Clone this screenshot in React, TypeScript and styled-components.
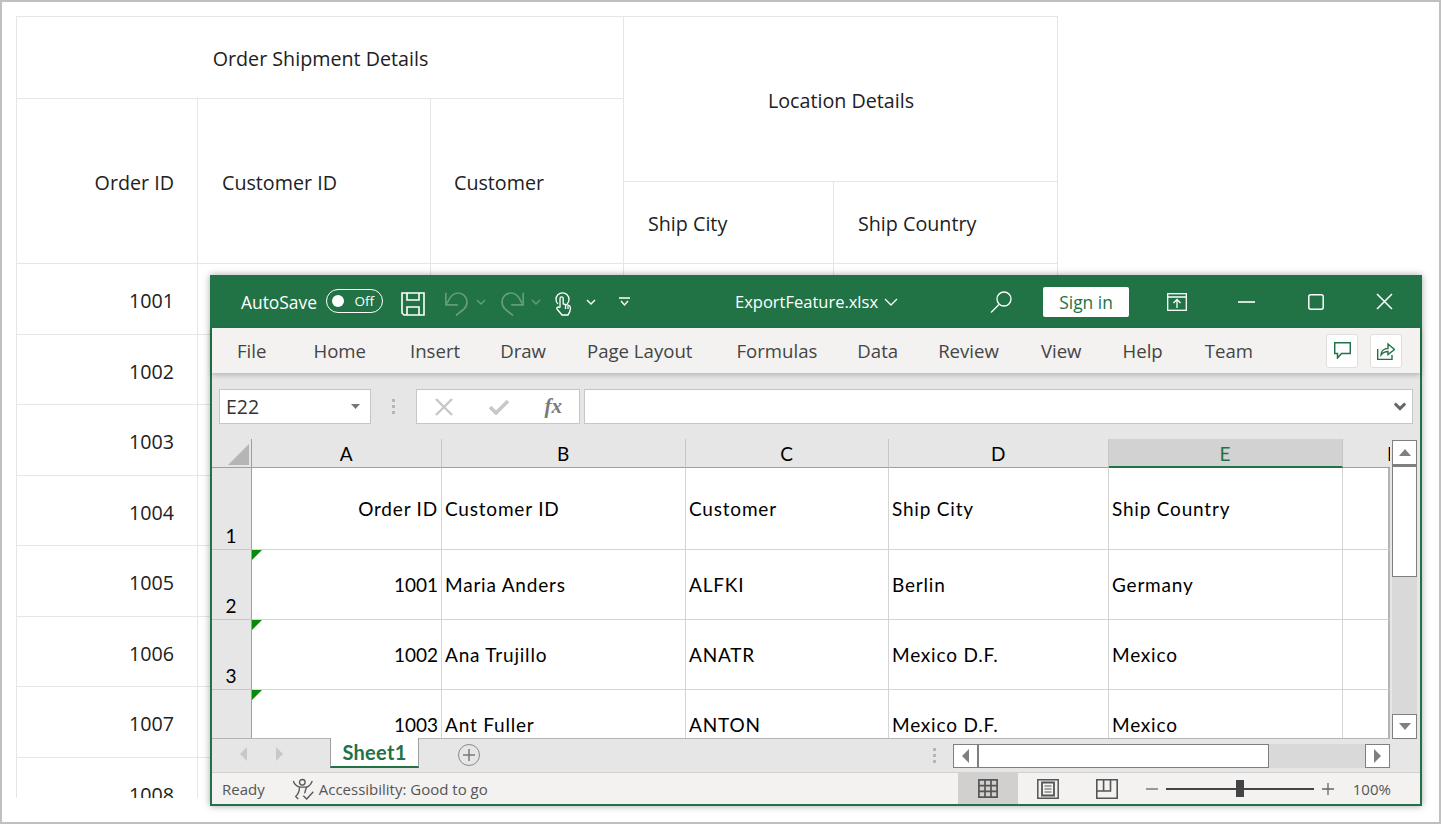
import { Fragment } from "react";
import styled, { createGlobalStyle } from "styled-components";

const GREEN = "#217346";
const UI_FONT = `"Open Sans", "Noto Sans", sans-serif`;
const CELL_FONT = `"Lato", "Open Sans", sans-serif`;

const GlobalStyle = createGlobalStyle`
  html, body { margin: 0; padding: 0; background: #fff; }
  * { box-sizing: border-box; }
`;

const Page = styled.div`
  position: relative;
  width: 1441px;
  height: 824px;
  padding: 14px 0 0 14px;
  border: 2px solid #c0c0c0;
  background: #fff;
  overflow: hidden;
  font-family: ${UI_FONT};
`;

/* ---------- web grid behind ---------- */
const WebGrid = styled.div`
  display: grid;
  grid-template-columns: 181px 233px 193px 210px 224px;
  grid-template-rows: 82px 83px 82px repeat(8, 70.5px);
  width: 1042px;
  height: 782px;
  overflow: hidden;
  border-top: 1px solid #e6e6e6;
  border-left: 1px solid #e6e6e6;
  font-size: 19.7px;
  color: #212121;
`;

const GridCell = styled.div<{ $align?: string; $col?: string; $row?: string; $data?: boolean; $pl?: number }>`
  display: flex;
  align-items: center;
  justify-content: ${(p) => p.$align || "flex-start"};
  grid-column: ${(p) => p.$col || "auto"};
  grid-row: ${(p) => p.$row || "auto"};
  padding: ${(p) => (p.$data ? "4px" : "2px")} 23px 0 ${(p) => p.$pl || 24}px;
  border-right: 1px solid #e6e6e6;
  border-bottom: 1px solid #e6e6e6;
`;

/* ---------- excel window ---------- */
const ExcelWindow = styled.div`
  position: absolute;
  left: 208px;
  top: 273px;
  width: 1212px;
  height: 531px;
  display: flex;
  flex-direction: column;
  border: 2px solid ${GREEN};
  border-top: 0;
  background: #e6e6e6;
  box-shadow: 0 0 7px rgba(0, 0, 0, 0.35);
`;

const TitleBar = styled.div`
  flex: 0 0 53px;
  display: flex;
  align-items: center;
  padding-left: 31px;
  margin: 0 -2px;
  background: ${GREEN};
  color: #fff;
  font-size: 16.5px;
`;

const TitleText = styled.span<{ $ml?: number; $size?: number }>`
  margin-left: ${(p) => p.$ml || 0}px;
  font-size: ${(p) => p.$size || 16.5}px;
  white-space: nowrap;
`;

const Toggle = styled.div`
  display: flex;
  align-items: center;
  justify-content: space-between;
  width: 57px;
  height: 24px;
  margin: 0 0 2px 9px;
  padding: 0 8px 0 5px;
  border: 1px solid #fff;
  border-radius: 12px;
  font-size: 13.5px;
  &::before {
    content: "";
    width: 12px;
    height: 12px;
    border-radius: 50%;
    background: #fff;
  }
`;

const TitleIcon = styled.svg<{ $ml: number; $dim?: boolean; $mt?: number }>`
  flex: none;
  margin-left: ${(p) => p.$ml}px;
  margin-top: ${(p) => p.$mt || 0}px;
  fill: none;
  stroke: currentColor;
  opacity: ${(p) => (p.$dim ? 0.3 : 1)};
`;

const SignIn = styled.div`
  width: 86px;
  height: 30px;
  margin-left: 31px;
  display: flex;
  align-items: center;
  justify-content: center;
  background: #fff;
  border-radius: 2px;
  color: ${GREEN};
  font-size: 17.4px;
`;

const Ribbon = styled.div`
  flex: 0 0 45px;
  display: flex;
  align-items: center;
  padding: 0 18px 0 25px;
  background: #f3f2f1;
  box-shadow: 0 2px 5px rgba(0, 0, 0, 0.22);
  position: relative;
  color: #444;
  font-size: 18.6px;
`;

const RibbonTab = styled.span<{ $ml: number }>`
  margin-left: ${(p) => p.$ml}px;
  white-space: nowrap;
`;

const RibbonActions = styled.div`
  margin-left: auto;
  display: flex;
  gap: 12px;
`;

const RibbonButton = styled.div`
  width: 32px;
  height: 34px;
  display: flex;
  align-items: center;
  justify-content: center;
  background: #fff;
  border: 1px solid #e1dfdd;
  border-radius: 3px;
  color: ${GREEN};
`;

const FormulaBar = styled.div`
  flex: 0 0 66px;
  display: flex;
  align-items: flex-start;
  padding: 16px 7px 0 7px;
`;

const InputBox = styled.div<{ $w?: number }>`
  height: 35px;
  ${(p) => (p.$w ? `width: ${p.$w}px;` : "flex: 1;")}
  display: flex;
  align-items: center;
  background: #fff;
  border: 1px solid #c6c6c6;
`;

const NameBox = styled(InputBox)`
  justify-content: space-between;
  padding: 0 10px 0 6px;
  font-size: 19.5px;
  color: #333;
`;

const Grip = styled.div`
  flex: none;
  width: 3px;
  height: 15px;
  background: repeating-linear-gradient(to bottom, #b5b5b5 0 3px, transparent 3px 6px);
`;

const GripSlot = styled.div`
  flex: 0 0 45px;
  height: 35px;
  display: flex;
  align-items: center;
  justify-content: center;
`;

const FormulaButtons = styled(InputBox)`
  margin-right: 4px;
  justify-content: space-between;
  padding: 0 17px 0 18px;
  color: #c8c8c8;
`;

const FxLabel = styled.span`
  font-family: "Liberation Serif", serif;
  font-style: italic;
  font-weight: 700;
  font-size: 21px;
  color: #7a7a7a;
`;

const FormulaInput = styled(InputBox)`
  justify-content: flex-end;
  padding-right: 6px;
`;

const SheetArea = styled.div`
  flex: 0 0 300px;
  display: flex;
  min-height: 0;
`;

const Sheet = styled.div`
  flex: 0 0 1178px;
  display: grid;
  grid-template-columns: 40px 190px 244px 203px 220px 234px 47px;
  grid-template-rows: 29px 82px 70px 70px 70px;
  overflow: hidden;
  font-family: ${CELL_FONT};
  font-size: 19px;
  letter-spacing: 0.8px;
  color: #000;
  background: #fff;
  border-bottom: 1px solid #b4b4b4;
`;

const ColHead = styled.div<{ $active?: boolean; $clip?: boolean }>`
  display: flex;
  align-items: center;
  justify-content: ${(p) => (p.$clip ? "flex-start" : "center")};
  padding-top: 1px;
  overflow: hidden;
  background: ${(p) => (p.$active ? "#d2d2d2" : "#e6e6e6")};
  color: ${(p) => (p.$active ? GREEN : "#000")};
  border-right: ${(p) => (p.$clip ? "0" : "1px solid #c6c6c6")};
  border-bottom: ${(p) => (p.$active ? `2px solid ${GREEN}` : "1px solid #9f9f9f")};
  padding-left: ${(p) => (p.$clip ? "44px" : "0")};
`;

const Corner = styled(ColHead)`
  align-items: flex-end;
  justify-content: flex-end;
  padding: 0 2px 2px 0;
  border-right: 1px solid #9f9f9f;
  &::before {
    content: "";
    width: 0;
    height: 0;
    border-left: 21px solid transparent;
    border-bottom: 21px solid #b5b5b5;
  }
`;

const RowHead = styled.div`
  display: flex;
  align-items: flex-end;
  justify-content: center;
  padding-bottom: 2px;
  background: #e6e6e6;
  border-right: 1px solid #9f9f9f;
  border-bottom: 1px solid #c6c6c6;
`;

const Cell = styled.div<{ $right?: boolean; $flag?: boolean; $last?: boolean }>`
  position: relative;
  display: flex;
  align-items: center;
  justify-content: ${(p) => (p.$right ? "flex-end" : "flex-start")};
  padding: 0 3px;
  white-space: nowrap;
  border-right: ${(p) => (p.$last ? "2px solid #b4b4b4" : "1px solid #d4d4d4")};
  border-bottom: 1px solid #d4d4d4;
  ${(p) =>
    p.$flag
      ? `letter-spacing: 0;
        &::before {
          content: "";
          position: absolute;
          left: 0;
          top: 0;
          border-top: 10px solid #0a8a0a;
          border-right: 10px solid transparent;
        }`
      : ""}
`;

const VScroll = styled.div`
  flex: 0 0 28px;
  display: flex;
  flex-direction: column;
  padding: 1px 3px 0 2px;
`;

const ScrollButton = styled.div<{ $w?: number; $h?: number }>`
  flex: none;
  width: ${(p) => p.$w || 25}px;
  height: ${(p) => p.$h || 25}px;
  display: flex;
  align-items: center;
  justify-content: center;
  background: #fff;
  border: 1px solid #7f7f7f;
`;

const VThumb = styled.div`
  flex: 0 0 112px;
  background: #fff;
  border: 1px solid #7f7f7f;
  border-top-width: 2px;
`;

const VTrack = styled.div`
  flex: 1;
  background: #d9d9d9;
`;

const TabStrip = styled.div`
  flex: 0 0 33px;
  display: flex;
  align-items: flex-start;
  font-size: 18px;
`;

const TabNav = styled.div`
  flex: 0 0 118px;
  height: 30px;
  display: flex;
  align-items: center;
  gap: 27px;
  padding-left: 27px;
  color: #c8c8c8;
`;

const SheetTab = styled.div`
  flex: 0 0 89px;
  height: 30px;
  margin-top: -1px;
  display: flex;
  align-items: center;
  justify-content: center;
  background: #fff;
  border-left: 1px solid #9f9f9f;
  border-right: 1px solid #9f9f9f;
  border-bottom: 2px solid ${GREEN};
  color: ${GREEN};
  font-family: ${CELL_FONT};
  font-weight: 700;
  font-size: 20px;
  letter-spacing: 0.3px;
`;

const AddSheet = styled.div`
  flex: none;
  width: 22px;
  height: 22px;
  margin: 5px 0 0 39px;
  display: flex;
  align-items: center;
  justify-content: center;
  border: 1.5px solid #8a8a8a;
  border-radius: 50%;
  color: #7a7a7a;
`;

const HScrollGrip = styled.div`
  flex: none;
  margin: 9px 0 0 453px;
  width: 3px;
`;

const HScroll = styled.div`
  flex: 0 0 437px;
  height: 24px;
  margin: 5px 0 0 17px;
  display: flex;
  background: #d9d9d9;
`;

const HThumb = styled.div`
  flex: 0 0 292px;
  margin-left: -1px;
  background: #fff;
  border: 1px solid #7f7f7f;
  border-left-width: 2px;
`;

const HGap = styled.div`
  flex: 1;
`;

const StatusBar = styled.div`
  flex: 1;
  display: flex;
  align-items: center;
  padding-left: 10px;
  background: #f3f2f1;
  border-top: 1px solid #d1d1d1;
  color: #555;
  font-size: 15px;
`;

const StatusText = styled.span<{ $ml?: number }>`
  margin-left: ${(p) => p.$ml || 0}px;
  white-space: nowrap;
`;

const AccessIcon = styled.svg`
  flex: none;
  margin-left: 27px;
`;

const ViewButton = styled.div<{ $active?: boolean; $ml?: number }>`
  flex: none;
  width: 60px;
  height: 100%;
  margin-left: ${(p) => p.$ml || 0}px;
  display: flex;
  align-items: center;
  justify-content: center;
  background: ${(p) => (p.$active ? "#d2d0ce" : "transparent")};
  color: #555;
`;

const ZoomSlider = styled.div`
  position: relative;
  flex: 0 0 148px;
  height: 2px;
  margin: 0 8px;
  background: #444;
`;

const ZoomThumb = styled.div`
  position: absolute;
  left: 70px;
  top: -8px;
  width: 8px;
  height: 17px;
  background: #444;
`;

const ZoomSign = styled.svg<{ $ml?: number }>`
  flex: none;
  margin-left: ${(p) => p.$ml || 0}px;
  stroke: #666;
`;

const webRows = [1001, 1002, 1003, 1004, 1005, 1006, 1007, 1008];

const sheetRows = [
  { id: "1001", name: "Maria Anders", code: "ALFKI", city: "Berlin", country: "Germany" },
  { id: "1002", name: "Ana Trujillo", code: "ANATR", city: "Mexico D.F.", country: "Mexico" },
  { id: "1003", name: "Ant Fuller", code: "ANTON", city: "Mexico D.F.", country: "Mexico" },
];

const ribbonTabs: [string, number][] = [
  ["File", 0],
  ["Home", 47],
  ["Insert", 44],
  ["Draw", 40],
  ["Page Layout", 41],
  ["Formulas", 44],
  ["Data", 40],
  ["Review", 40],
  ["View", 42],
  ["Help", 41],
  ["Team", 42],
];

const Triangle = ({ dir, color = "#7f7f7f" }: { dir: "up" | "down" | "left" | "right"; color?: string }) => {
  const pts = {
    up: "0,8 6,1 12,8",
    down: "0,1 12,1 6,8",
    left: "8,0 8,14 1,7",
    right: "1,0 1,14 8,7",
  }[dir];
  const vertical = dir === "up" || dir === "down";
  return (
    <svg width={vertical ? 14 : 9} height={vertical ? 9 : 14} viewBox={vertical ? "-1 0 14 9" : "0 0 9 14"} fill={color}>
      <polygon points={pts} />
    </svg>
  );
};

const Chevron = ({ ml, dim }: { ml: number; dim?: boolean }) => (
  <TitleIcon $ml={ml} $dim={dim} width="10" height="6" viewBox="0 0 10 6" strokeWidth="1.4">
    <path d="M1 1l4 4 4-4" />
  </TitleIcon>
);

export default function App() {
  return (
    <>
      <GlobalStyle />
      <Page>
        <WebGrid>
          <GridCell $col="1 / 4" $align="center">Order Shipment Details</GridCell>
          <GridCell $col="4 / 6" $row="1 / 3" $align="center">Location Details</GridCell>
          <GridCell $row="2 / 4" $align="flex-end">Order ID</GridCell>
          <GridCell $row="2 / 4">Customer ID</GridCell>
          <GridCell $row="2 / 4" $pl={23}>Customer</GridCell>
          <GridCell>Ship City</GridCell>
          <GridCell>Ship Country</GridCell>
          {webRows.map((id) => (
            <Fragment key={id}>
              <GridCell $data $align="flex-end">{id}</GridCell>
              <GridCell />
              <GridCell />
              <GridCell />
              <GridCell />
            </Fragment>
          ))}
        </WebGrid>

        <ExcelWindow>
          <TitleBar>
            <TitleText $size={17.4}>AutoSave</TitleText>
            <Toggle>Off</Toggle>
            <TitleIcon $ml={18} $mt={4} width="24" height="24" viewBox="0 0 24 24" strokeWidth="1.6">
              <path d="M1 1h22v22H3l-2-2z" />
              <path d="M6 1v7h12V1M6 23v-8h12v8" />
            </TitleIcon>
            <TitleIcon $ml={20} $mt={4} $dim width="24" height="24" viewBox="0 0 24 24" strokeWidth="1.7">
              <path d="M.8 .8V12.8H12.8" />
              <path d="M2 11.5C5 4 9 1 13 1c5 0 9 4 9 9 0 3-1 5-3 7l-8 6.5" />
            </TitleIcon>
            <Chevron ml={7} dim />
            <TitleIcon $ml={14} $mt={4} $dim width="24" height="24" viewBox="0 0 24 24" strokeWidth="1.7">
              <path d="M23.2 .8V12.8H11.2" />
              <path d="M22 11.5C19 4 15 1 11 1 6 1 2 5 2 10c0 3 1 5 3 7l8 6.5" />
            </TitleIcon>
            <Chevron ml={7} dim />
            <TitleIcon $ml={13} $mt={4} width="18" height="24" viewBox="0 0 18 24" strokeWidth="1.3">
              <path d="M4 12a6.5 6.5 0 1 1 9 0" />
              <path d="M6 15V6.5a1.6 1.6 0 0 1 3.2 0V12l5 1.2c1.4.4 2.3 1.4 2.3 2.8 0 3-1 5-2.5 7H8l-5-6c-.8-1.3.8-2.6 2-1.6z" fill={GREEN} />
              <path d="M11.5 13v4M14 14v3" />
            </TitleIcon>
            <Chevron ml={14} />
            <TitleIcon $ml={23} width="11" height="9" viewBox="0 0 11 9" strokeWidth="1.3">
              <path d="M0 1h11M2 4l3.5 4L9 4" />
            </TitleIcon>
            <TitleText $ml={105}>ExportFeature.xlsx</TitleText>
            <TitleIcon $ml={6} width="14" height="8" viewBox="0 0 14 8" strokeWidth="1.3">
              <path d="M1 1l6 6 6-6" />
            </TitleIcon>
            <TitleIcon $ml={92} width="22" height="22" viewBox="0 0 22 22" strokeWidth="1.3">
              <circle cx="14" cy="8" r="7" />
              <path d="M9 13.5L1 21.5" />
            </TitleIcon>
            <SignIn>Sign in</SignIn>
            <TitleIcon $ml={38} width="20" height="18" viewBox="0 0 20 18" strokeWidth="1.3">
              <rect x="0.7" y="0.7" width="18.6" height="16.6" />
              <path d="M1 4h18M10 15V7M6.5 10L10 6.5l3.5 3.5" />
            </TitleIcon>
            <TitleIcon $ml={51} width="17" height="2" viewBox="0 0 17 2" strokeWidth="1.6">
              <path d="M0 1h17" />
            </TitleIcon>
            <TitleIcon $ml={53} width="16" height="16" viewBox="0 0 16 16" strokeWidth="1.5">
              <rect x="0.8" y="0.8" width="14.4" height="14.4" rx="2" />
            </TitleIcon>
            <TitleIcon $ml={52} width="17" height="17" viewBox="0 0 17 17" strokeWidth="1.5">
              <path d="M1 1l15 15M16 1L1 16" />
            </TitleIcon>
          </TitleBar>

          <Ribbon>
            {ribbonTabs.map(([label, ml]) => (
              <RibbonTab key={label} $ml={ml}>{label}</RibbonTab>
            ))}
            <RibbonActions>
              <RibbonButton>
                <svg width="17" height="17" viewBox="0 0 17 17" fill="none" stroke="currentColor" strokeWidth="1.5">
                  <path d="M.7 .7h15.6v10.8H7.5l-4 4.5v-4.5H.7z" />
                </svg>
              </RibbonButton>
              <RibbonButton>
                <svg width="18" height="18" viewBox="0 0 18 18" fill="none" stroke="currentColor" strokeWidth="1.4">
                  <path d="M.7 7v10.5H15V13" />
                  <path d="M4 13c0-4 3-6.5 7-6.5V2l6.5 5.5-6.5 5V9.5c-3 0-5 1-7 3.5z" />
                </svg>
              </RibbonButton>
            </RibbonActions>
          </Ribbon>

          <FormulaBar>
            <NameBox $w={152}>
              E22
              <svg width="9" height="5" viewBox="0 0 9 5" fill="#777">
                <polygon points="0,0 9,0 4.5,5" />
              </svg>
            </NameBox>
            <GripSlot><Grip /></GripSlot>
            <FormulaButtons $w={164}>
              <svg width="18" height="18" viewBox="0 0 18 18" stroke="currentColor" strokeWidth="2.4">
                <path d="M1 1l16 16M17 1L1 17" />
              </svg>
              <svg width="20" height="16" viewBox="0 0 20 16" fill="none" stroke="currentColor" strokeWidth="3.6">
                <path d="M1 8l6 6L19 2" />
              </svg>
              <FxLabel>fx</FxLabel>
            </FormulaButtons>
            <FormulaInput>
              <svg width="12" height="9" viewBox="0 0 14 10" fill="none" stroke="#666" strokeWidth="3.4">
                <path d="M1 1.5l6 6 6-6" />
              </svg>
            </FormulaInput>
          </FormulaBar>

          <SheetArea>
            <Sheet>
              <Corner />
              <ColHead>A</ColHead>
              <ColHead>B</ColHead>
              <ColHead>C</ColHead>
              <ColHead>D</ColHead>
              <ColHead $active>E</ColHead>
              <ColHead $clip>F</ColHead>

              <RowHead>1</RowHead>
              <Cell $right>Order ID</Cell>
              <Cell>Customer ID</Cell>
              <Cell>Customer</Cell>
              <Cell>Ship City</Cell>
              <Cell>Ship Country</Cell>
              <Cell $last />

              {sheetRows.map((row, i) => (
                <Fragment key={row.id}>
                  <RowHead>{i + 2}</RowHead>
                  <Cell $right $flag>{row.id}</Cell>
                  <Cell>{row.name}</Cell>
                  <Cell>{row.code}</Cell>
                  <Cell>{row.city}</Cell>
                  <Cell>{row.country}</Cell>
                  <Cell $last />
                </Fragment>
              ))}
            </Sheet>
            <VScroll>
              <ScrollButton><Triangle dir="up" /></ScrollButton>
              <VThumb />
              <VTrack />
              <ScrollButton><Triangle dir="down" /></ScrollButton>
            </VScroll>
          </SheetArea>

          <TabStrip>
            <TabNav>
              <Triangle dir="left" color="#c8c8c8" />
              <Triangle dir="right" color="#c8c8c8" />
            </TabNav>
            <SheetTab>Sheet1</SheetTab>
            <AddSheet>
              <svg width="12" height="12" viewBox="0 0 12 12" stroke="currentColor" strokeWidth="1.5">
                <path d="M6 0v12M0 6h12" />
              </svg>
            </AddSheet>
            <HScrollGrip><Grip /></HScrollGrip>
            <HScroll>
              <ScrollButton $w={25} $h={24}><Triangle dir="left" /></ScrollButton>
              <HThumb />
              <HGap />
              <ScrollButton $w={25} $h={24}><Triangle dir="right" /></ScrollButton>
            </HScroll>
          </TabStrip>

          <StatusBar>
            <StatusText>Ready</StatusText>
            <AccessIcon width="24" height="22" viewBox="0 0 24 22" fill="none" stroke="#555" strokeWidth="1.3">
              <circle cx="10.3" cy="4.3" r="2.8" />
              <path d="M1.3 3C2.5 6.5 5 8.5 8 9.2h6.7C17 8.5 19 6 20.3 3" />
              <path d="M7.5 9.2c0 4-1.5 7-3.8 9.2l2.5 2.6M14.7 8.7c-.8 2-1.5 4-2 6.6" />
              <path d="M11.3 17.7l3.4 3.3 6.6-7.3" />
            </AccessIcon>
            <StatusText $ml={3}>Accessibility: Good to go</StatusText>
            <ViewButton $active $ml={470}>
              <svg width="20" height="19" viewBox="0 0 20 19" fill="none" stroke="#555" strokeWidth="1.7">
                <path d="M.9.9h18.2v17.2H.9zM.9 6.6h18.2M.9 12.3h18.2M7 .9v17.2M13 .9v17.2" />
              </svg>
            </ViewButton>
            <ViewButton>
              <svg width="22" height="20" viewBox="0 0 22 20" fill="none" stroke="#555" strokeWidth="1.5">
                <path d="M.8.8h20.4v18.4H.8z" />
                <path d="M5 3.5h12v13H5z" strokeWidth="1.8" />
                <path d="M7.5 7h7M7.5 10h7M7.5 13h7" strokeWidth="1.2" />
              </svg>
            </ViewButton>
            <ViewButton $ml={-1}>
              <svg width="22" height="20" viewBox="0 0 22 20" fill="none" stroke="#555" strokeWidth="1.6">
                <path d="M.8.8h20.4v18.4H.8zM.8 12h13.7V.8M7.6 .8V12" />
              </svg>
            </ViewButton>
            <ZoomSign $ml={9} width="12" height="2" viewBox="0 0 12 2" strokeWidth="1.3">
              <path d="M0 1h12" />
            </ZoomSign>
            <ZoomSlider><ZoomThumb /></ZoomSlider>
            <ZoomSign width="12" height="12" viewBox="0 0 12 12" strokeWidth="1.3">
              <path d="M0 6h12M6 0v12" />
            </ZoomSign>
            <StatusText $ml={19}>100%</StatusText>
          </StatusBar>
        </ExcelWindow>
      </Page>
    </>
  );
}
